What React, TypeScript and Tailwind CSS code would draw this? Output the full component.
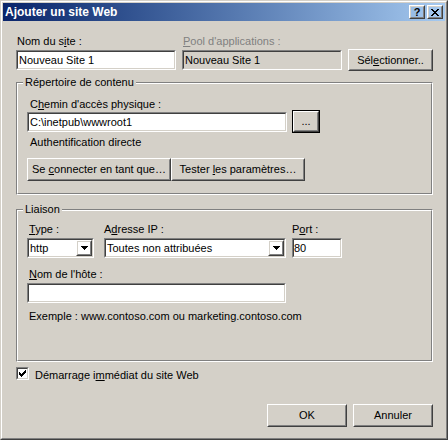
import type { ReactNode } from "react"

const Raised = ({ className, children }: { className: string; children?: ReactNode }) => (
    <div className={`border border-t-white border-l-white border-r-[#404040] border-b-[#404040] ${className}`}>
        <div className="flex h-full w-full items-center justify-center border border-t-[#d4d0c8] border-l-[#d4d0c8] border-r-[#808080] border-b-[#808080]">
            {children}
        </div>
    </div>
)

const Field = ({ className, bg = "bg-white", children }: { className: string; bg?: string; children?: ReactNode }) => (
    <div className={`border border-t-[#808080] border-l-[#808080] border-r-white border-b-white ${className}`}>
        <div className={`flex h-full w-full items-center border border-t-[#404040] border-l-[#404040] border-r-[#d4d0c8] border-b-[#d4d0c8] ${bg}`}>
            {children}
        </div>
    </div>
)

const Arrow = () => (
    <svg width="7" height="4" viewBox="0 0 7 4" shapeRendering="crispEdges">
        <rect x="0" y="0" width="7" height="1" fill="#000" />
        <rect x="1" y="1" width="5" height="1" fill="#000" />
        <rect x="2" y="2" width="3" height="1" fill="#000" />
        <rect x="3" y="3" width="1" height="1" fill="#000" />
    </svg>
)

const Select = ({ className, value }: { className: string; value: string }) => (
    <Field className={className}>
        <span className="flex-1 truncate pl-[1px]">{value}</span>
        <Raised className="h-[16px] w-[16px]">
            <Arrow />
        </Raised>
    </Field>
)

const Group = ({ legend, className, children }: { legend: string; className: string; children: ReactNode }) => (
    <div className={`relative border border-t-[#808080] border-l-[#808080] border-r-white border-b-white ${className}`}>
        <div className="flex h-full w-full flex-col border border-t-white border-l-white border-r-[#808080] border-b-[#808080] pl-[9px]">
            {children}
        </div>
        <span className="absolute left-[6px] top-[-7px] bg-[#d4d0c8] px-[2px]">{legend}</span>
    </div>
)

const App = () => {
    return (
        <div className="h-[440px] w-[448px] border border-t-[#d4d0c8] border-l-[#d4d0c8] border-r-[#404040] border-b-[#404040] font-['Liberation_Sans',Arial,sans-serif] text-[11px] leading-[13px] text-black">
            <div className="h-full w-full border border-t-white border-l-white border-r-[#808080] border-b-[#808080] bg-[#d4d0c8] p-[1px]">
                {/* barre de titre */}
                <div className="flex h-[18px] items-center bg-linear-to-r from-[#0a246a] to-[#a6caf0]">
                    <span className="flex-1 pl-[2px] text-[12px] font-bold text-white">Ajouter un site Web</span>
                    <Raised className="h-[14px] w-[16px]">
                        <span className="text-[11px] leading-[10px] font-bold">?</span>
                    </Raised>
                    <Raised className="ml-[2px] mr-[2px] h-[14px] w-[16px]">
                        <svg width="8" height="7" viewBox="0 0 8 7" shapeRendering="crispEdges">
                            <path d="M0 0h2v1H0zM6 0h2v1H6zM1 1h2v1H1zM5 1h2v1H5zM2 2h4v1H2zM3 3h2v1H3zM2 4h4v1H2zM1 5h2v1H1zM5 5h2v1H5zM0 6h2v1H0zM6 6h2v1H6z" fill="#000" />
                        </svg>
                    </Raised>
                </div>

                <div className="flex flex-col pl-[13px] pr-[12px] pt-[14px]">
                    <div className="flex items-start">
                        <div className="flex w-[160px] flex-col">
                            <span className="pl-[1px]">Nom du s<u className="underline">i</u>te :</span>
                            <Field className="mt-[2px] h-[20px] w-[160px]">
                                <span className="pl-[1px]">Nouveau Site 1</span>
                            </Field>
                        </div>
                        <div className="ml-[6px] flex w-[160px] flex-col">
                            <span className="pl-[1px] text-[#808080]"><u className="underline">P</u>ool d'applications :</span>
                            <Field className="mt-[2px] h-[20px] w-[160px]" bg="bg-[#d4d0c8]">
                                <span className="pl-[1px]">Nouveau Site 1</span>
                            </Field>
                        </div>
                        <Raised className="ml-[6px] mt-[14px] h-[22px] w-[85px]">
                            <span>Sél<u className="underline">e</u>ctionner..</span>
                        </Raised>
                    </div>

                    <Group legend="Répertoire de contenu" className="mt-[11px] h-[113px]">
                        <span className="pl-[3px] pt-[14px]">C<u className="underline">h</u>emin d'accès physique :</span>
                        <div className="mt-[1px] flex h-[20px] items-start">
                            <Field className="h-[20px] w-[260px]">
                                <span className="pl-[1px]">C:\inetpub\wwwroot1</span>
                            </Field>
                            <div className="ml-[5px] mt-[-2px] h-[23px] w-[28px] border border-black">
                                <Raised className="h-full w-full">
                                    <span>...</span>
                                </Raised>
                            </div>
                        </div>
                        <span className="mt-[4px] pl-[3px]">Authentification directe</span>
                        <div className="mt-[9px] flex">
                            <Raised className="h-[23px] w-[144px]">
                                <span>Se <u className="underline">c</u>onnecter en tant que…</span>
                            </Raised>
                            <Raised className="h-[23px] w-[134px]">
                                <span>Tester <u className="underline">l</u>es paramètres…</span>
                            </Raised>
                        </div>
                    </Group>

                    <Group legend="Liaison" className="mt-[14px] h-[153px]">
                        <div className="flex items-start pt-[12px]">
                            <div className="flex w-[67px] flex-col">
                                <span className="pl-[2px]"><u className="underline">T</u>ype :</span>
                                <Select className="mt-[2px] h-[20px] w-[67px]" value="http" />
                            </div>
                            <div className="ml-[10px] flex w-[182px] flex-col">
                                <span>A<u className="underline">d</u>resse IP :</span>
                                <Select className="mt-[2px] h-[20px] w-[182px]" value="Toutes non attribuées" />
                            </div>
                            <div className="ml-[6px] flex w-[50px] flex-col">
                                <span>P<u className="underline">o</u>rt :</span>
                                <Field className="mt-[2px] h-[20px] w-[50px]">
                                    <span>80</span>
                                </Field>
                            </div>
                        </div>
                        <span className="mt-[10px] pl-[2px]"><u className="underline">N</u>om de l'hôte :</span>
                        <Field className="mt-[2px] h-[20px] w-[259px]" />
                        <span className="mt-[7px] pl-[2px]">Exemple : www.contoso.com ou marketing.contoso.com</span>
                    </Group>

                    <div className="mt-[5px] flex items-start">
                        <Field className="h-[13px] w-[13px]">
                            <svg className="ml-[1px]" width="7" height="7" viewBox="0 0 7 7" shapeRendering="crispEdges">
                                <path d="M6 0h1v3H6zM5 1h1v3H5zM4 2h1v3H4zM3 3h1v3H3zM2 4h1v3H2zM1 3h1v3H1zM0 2h1v3H0z" fill="#000" />
                            </svg>
                        </Field>
                        <span className="ml-[6px] mt-[2px]">Démarrage i<u className="underline">m</u>médiat du site Web</span>
                    </div>

                    <div className="mt-[22px] flex justify-end gap-[6px]">
                        <Raised className="h-[23px] w-[80px]">
                            <span>OK</span>
                        </Raised>
                        <Raised className="h-[23px] w-[80px]">
                            <span>Annuler</span>
                        </Raised>
                    </div>
                </div>
            </div>
        </div>
    )
}

export default App
